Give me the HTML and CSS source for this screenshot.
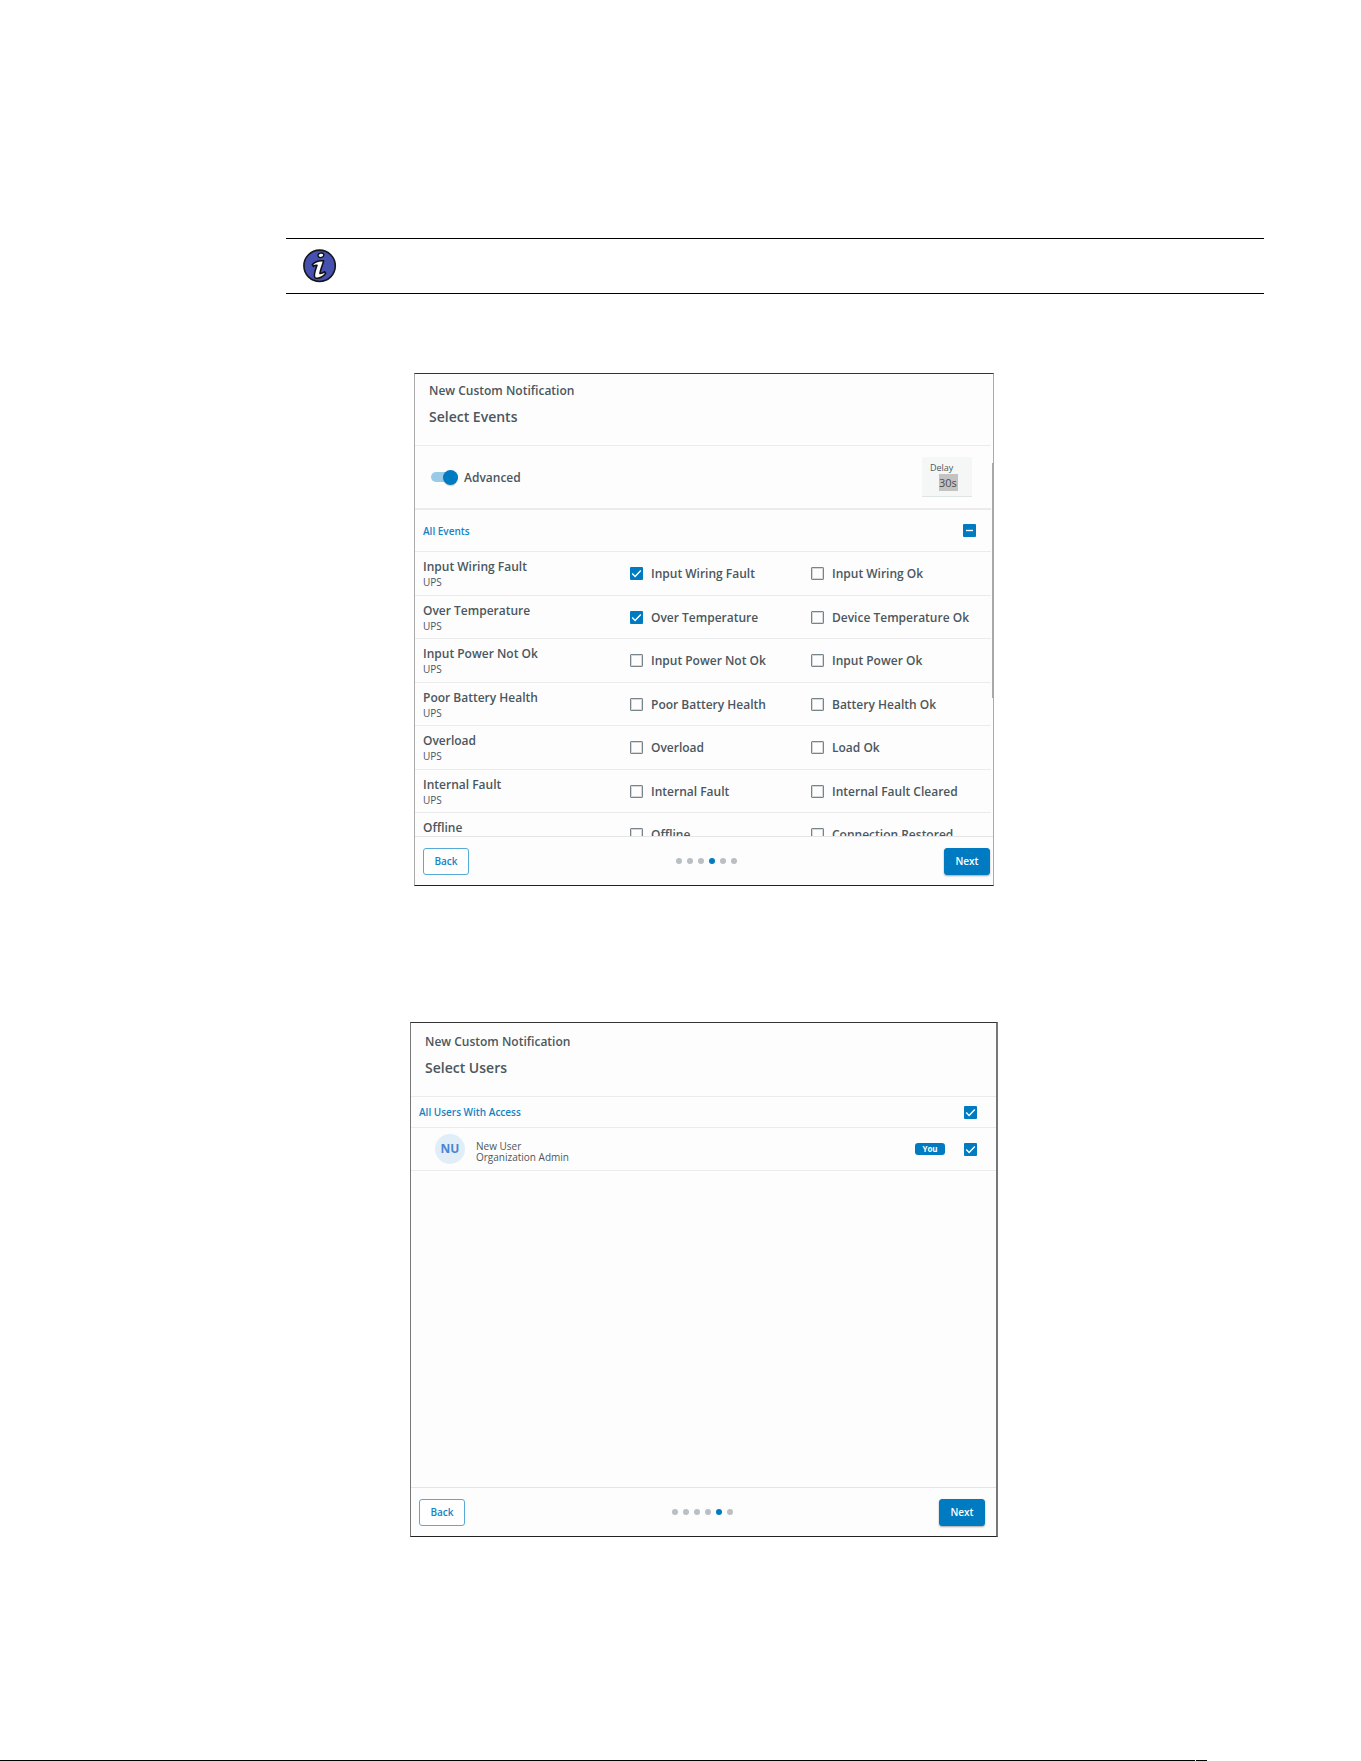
FILE: index.html
```html
<!DOCTYPE html>
<html lang="en">
<head>
    <meta charset="UTF-8">
    <meta name="viewport" content="width=device-width, initial-scale=1.0">
    <title>New Custom Notification</title>
    <link rel="stylesheet" href="styles.css">
</head>
<body>
<main class="page">
    <div class="note">
        <svg class="note-icon" viewBox="0 0 34 34" role="img" aria-label="Information">
            <circle cx="16.6" cy="16.8" r="15.7" fill="#4650ae" stroke="#16161c" stroke-width="1.6"/>
            <ellipse cx="17.9" cy="6.3" rx="2.9" ry="2.2" transform="rotate(-15 17.9 6.3)" fill="#fff" stroke="#111" stroke-width="1.4"/>
            <path d="M9.4 15.6 C12 12.8 16 11.4 20.6 11.9 C20 15.4 17.4 20.3 16.9 24.4 C18.4 24.6 20 23.9 21.8 22.8 L22.6 24.6 C19.8 27.9 15.6 30 12.2 28.9 C9.8 27.2 12.4 21 14 16.3 C12.6 16 11.4 16.6 10.4 17.4 Z" fill="#fff" stroke="#111" stroke-width="1.6" stroke-linejoin="round"/>
        </svg>
    </div>

    <section class="dialog dialog-events">
        <header class="dialog-header">
            <p class="dialog-name">New Custom Notification</p>
            <h2>Select Events</h2>
        </header>
        <div class="dialog-body">
            <div class="options">
                <label class="switch">
                    <input type="checkbox" role="switch" checked>
                    <span>Advanced</span>
                </label>
                <div class="delay">
                    <label for="delay">Delay</label>
                    <input type="text" id="delay" value="30s">
                </div>
            </div>
            <div class="all-row">
                <label for="allEvents">All Events</label>
                <input type="checkbox" id="allEvents" class="check check-mixed">
            </div>
            <table class="events">
                <tbody>
                <tr>
                    <th scope="row">Input Wiring Fault<small>UPS</small></th>
                    <td><label><input type="checkbox" class="check" checked>Input Wiring Fault</label></td>
                    <td><label><input type="checkbox" class="check">Input Wiring Ok</label></td>
                </tr>
                <tr>
                    <th scope="row">Over Temperature<small>UPS</small></th>
                    <td><label><input type="checkbox" class="check" checked>Over Temperature</label></td>
                    <td><label><input type="checkbox" class="check">Device Temperature Ok</label></td>
                </tr>
                <tr>
                    <th scope="row">Input Power Not Ok<small>UPS</small></th>
                    <td><label><input type="checkbox" class="check">Input Power Not Ok</label></td>
                    <td><label><input type="checkbox" class="check">Input Power Ok</label></td>
                </tr>
                <tr>
                    <th scope="row">Poor Battery Health<small>UPS</small></th>
                    <td><label><input type="checkbox" class="check">Poor Battery Health</label></td>
                    <td><label><input type="checkbox" class="check">Battery Health Ok</label></td>
                </tr>
                <tr>
                    <th scope="row">Overload<small>UPS</small></th>
                    <td><label><input type="checkbox" class="check">Overload</label></td>
                    <td><label><input type="checkbox" class="check">Load Ok</label></td>
                </tr>
                <tr>
                    <th scope="row">Internal Fault<small>UPS</small></th>
                    <td><label><input type="checkbox" class="check">Internal Fault</label></td>
                    <td><label><input type="checkbox" class="check">Internal Fault Cleared</label></td>
                </tr>
                <tr>
                    <th scope="row">Offline</th>
                    <td><label><input type="checkbox" class="check">Offline</label></td>
                    <td><label><input type="checkbox" class="check">Connection Restored</label></td>
                </tr>
                </tbody>
            </table>
        </div>
        <div class="scroll-thumb"></div>
        <footer class="dialog-footer">
            <button type="button" class="btn">Back</button>
            <div class="steps">
                <i></i><i></i><i></i><i class="current"></i><i></i><i></i>
            </div>
            <button type="button" class="btn btn-primary">Next</button>
        </footer>
    </section>

    <section class="dialog dialog-users">
        <header class="dialog-header">
            <p class="dialog-name">New Custom Notification</p>
            <h2>Select Users</h2>
        </header>
        <div class="dialog-body">
            <div class="all-row">
                <label for="allUsers">All Users With Access</label>
                <input type="checkbox" id="allUsers" class="check" checked>
            </div>
            <div class="user">
                <span class="avatar">NU</span>
                <label for="newUser" class="user-name">New User<br>Organization Admin</label>
                <span class="badge">You</span>
                <input type="checkbox" id="newUser" class="check" checked>
            </div>
        </div>
        <footer class="dialog-footer">
            <button type="button" class="btn">Back</button>
            <div class="steps">
                <i></i><i></i><i></i><i></i><i class="current"></i><i></i>
            </div>
            <button type="button" class="btn btn-primary">Next</button>
        </footer>
    </section>
</main>
<div class="page-rule"><span></span><span></span></div>
</body>
</html>
```
FILE: styles.css
```css
* {
    box-sizing: border-box;
}

body {
    font-family: "Open Sans", sans-serif;
    font-size: 12px;
    font-weight: 600;
    color: #4b575d;
    background: #fff;
    display: flex;
    flex-direction: column;
    min-height: 100vh;
    margin: 0;
}

.page {
    flex: 1;
    padding: 238px 97px 0 286px;
}

.note {
    border-top: 1px solid #000;
    border-bottom: 1px solid #000;
    padding: 10px 17px;
}

.note-icon {
    display: block;
    width: 34px;
    height: 34px;
}

/* dialogs */

.dialog {
    position: relative;
    display: flex;
    flex-direction: column;
    border: 1px solid #aaa;
    border-top-color: #333;
    border-bottom-color: #222;
    background: #fdfdfd;
}

.dialog-events {
    max-width: 580px;
    margin: 79px 0 0 128px;
}

.dialog-users {
    max-width: 588px;
    margin: 136px 0 0 124px;
    border-left-color: #777;
    border-right: 2px solid #777;
}

.dialog-header {
    padding: 8px 14px 17px;
    border-bottom: 1px solid #ebebeb;
}

.dialog-events .dialog-header {
    margin-right: 2px;
}

.dialog-users .dialog-header {
    padding-top: 10px;
}

.dialog-name {
    margin: 0;
    line-height: 18px;
}

.dialog-header h2 {
    margin: 6px 0 0;
    font-size: 14px;
    font-weight: 600;
    line-height: 22px;
}

.dialog-events .dialog-body {
    height: 390px;
    margin-right: 2px;
    overflow: hidden;
}

.dialog-users .dialog-body {
    min-height: 390px;
}

.dialog-footer {
    display: flex;
    justify-content: space-between;
    align-items: center;
    height: 49px;
    padding: 0 3px 0 8px;
    border-top: 1px solid #e3e5e6;
}

.dialog-users .dialog-footer {
    padding-right: 11px;
}

.scroll-thumb {
    position: absolute;
    top: 89px;
    right: -1px;
    width: 2px;
    height: 235px;
    background: #a8a8a8;
}

/* options */

.options {
    display: flex;
    justify-content: space-between;
    align-items: center;
    height: 64px;
    padding: 0 19px 0 16px;
    border-bottom: 2px solid #ebebeb;
}

.switch {
    display: flex;
    align-items: center;
    gap: 6px;
}

.switch input {
    appearance: none;
    display: flex;
    align-items: center;
    justify-content: flex-end;
    width: 27px;
    height: 10px;
    margin: 0;
    border-radius: 5px;
    background: #99cbe8;
}

.switch input::before {
    content: "";
    width: 15px;
    height: 15px;
    flex: none;
    border-radius: 50%;
    background: #007bc1;
    box-shadow: 0 1px 1px rgba(0, 0, 0, 0.2);
}

.delay {
    display: flex;
    flex-direction: column;
    align-items: flex-start;
    width: 50px;
    height: 40px;
    padding: 4px 8px 0;
    border-bottom: 1px solid #dfe4e4;
    border-radius: 2px 2px 0 0;
    background: #f5f7f7;
}

.delay label {
    font-size: 9px;
    font-weight: 400;
    line-height: 13px;
}

.delay input {
    width: 19px;
    height: 17px;
    margin: 0 0 0 9px;
    padding: 0;
    border: 0;
    background: #c3c3c3;
    color: #4c4c4c;
    font: 400 11px/17px "Open Sans", sans-serif;
}

.all-row {
    display: flex;
    justify-content: space-between;
    align-items: center;
    height: 42px;
    padding: 0 15px 0 8px;
    border-bottom: 1px solid #ebebeb;
    color: #1583c6;
    font-size: 10px;
}

.dialog-users .all-row {
    height: 31px;
    padding-right: 19px;
}

/* check boxes */

.check {
    appearance: none;
    flex: none;
    width: 13px;
    height: 13px;
    margin: 0;
    border: 1px solid #78838a;
    border-radius: 1px;
    outline: 1px solid rgba(120, 131, 138, 0.3);
    outline-offset: -2px;
}

.check:checked, .check-mixed {
    border: 0;
    outline: 0;
    background: #007bc1 center / 13px 13px no-repeat;
}

.check:checked {
    background-image: url("data:image/svg+xml,%3Csvg xmlns='http://www.w3.org/2000/svg' viewBox='0 0 13 13'%3E%3Cpath d='M2.2 6.6l2.9 2.8 5.7-5.9' fill='none' stroke='white' stroke-width='1.4'/%3E%3C/svg%3E");
}

.check-mixed {
    background-image: url("data:image/svg+xml,%3Csvg xmlns='http://www.w3.org/2000/svg' viewBox='0 0 13 13'%3E%3Cpath d='M3 6.5h7' stroke='white' stroke-width='1.4'/%3E%3C/svg%3E");
}

/* events table */

.events {
    width: 100%;
    table-layout: fixed;
    border-collapse: separate;
    border-spacing: 0;
}

.events tr {
    height: 43px;
}

.events tr:nth-child(odd) {
    height: 44px;
}

.events th, .events td {
    padding: 0;
    border-bottom: 1px solid #ebebeb;
    text-align: left;
    font-weight: 600;
    white-space: nowrap;
}

.events th {
    width: 215px;
    padding: 7px 0 0 8px;
    line-height: 16px;
    vertical-align: top;
}

.events td:nth-child(2) {
    width: 181px;
}

.events small {
    display: block;
    font-size: 10px;
    font-weight: 400;
    line-height: 14px;
}

.events label {
    display: flex;
    align-items: center;
    gap: 8px;
}

/* users */

.user {
    display: flex;
    align-items: center;
    height: 43px;
    padding: 0 19px 0 24px;
    border-bottom: 1px solid #ebebeb;
}

.avatar {
    width: 30px;
    height: 30px;
    margin-right: 11px;
    border-radius: 50%;
    background: #e1eef8;
    color: #4a85d0;
    font-weight: 700;
    line-height: 30px;
    text-align: center;
}

.user-name {
    flex: 1;
    padding-top: 5px;
    font-size: 10px;
    font-weight: 400;
    line-height: 11px;
}

.badge {
    width: 30px;
    margin-right: 19px;
    border-radius: 3px;
    background: #007bc1;
    color: #fff;
    font-size: 8px;
    font-weight: 700;
    line-height: 12px;
    text-align: center;
}

/* footer */

.btn {
    width: 46px;
    height: 27px;
    padding: 0;
    border: 1px solid #56a9d8;
    border-radius: 3px;
    background: #fff;
    color: #1583c6;
    font: 600 10px "Open Sans", sans-serif;
    cursor: pointer;
}

.btn-primary {
    border-color: #007bc1;
    background: #007bc1;
    box-shadow: 0 1px 2px rgba(0, 0, 0, 0.35);
    color: #fff;
}

.steps {
    display: flex;
    gap: 5px;
}

.steps i {
    width: 6px;
    height: 6px;
    border-radius: 50%;
    background: #b9bfc2;
}

.steps .current {
    background: #007bc1;
}

.page-rule {
    display: flex;
    gap: 1px;
    height: 1px;
}

.page-rule span {
    width: 11px;
    background: #000;
}

.page-rule span:first-child {
    width: 1195px;
}
```
